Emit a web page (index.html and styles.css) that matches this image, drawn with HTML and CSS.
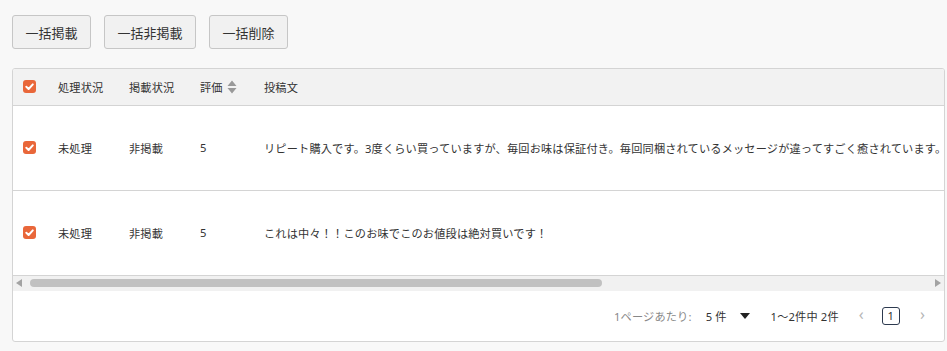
FILE: index.html
```html
<!DOCTYPE html>
<html lang="ja">
<head>
<meta charset="utf-8">
<link rel="stylesheet" href="styles.css">
</head>
<body>
<div class="toolbar">
  <button class="btn">一括掲載</button>
  <button class="btn">一括非掲載</button>
  <button class="btn">一括削除</button>
</div>
<div class="panel">
  <div class="scroller">
    <table class="grid">
      <colgroup>
        <col class="c-check"><col class="c-proc"><col class="c-pub"><col class="c-rate"><col>
      </colgroup>
      <thead>
        <tr>
          <th><span class="cb"><svg viewBox="0 0 13 13" width="13" height="13"><path d="M3.3 6.8 L5.6 9 L9.8 4.4" fill="none" stroke="#fff" stroke-width="2" stroke-linecap="round" stroke-linejoin="round"/></svg></span></th>
          <th>処理状況</th>
          <th>掲載状況</th>
          <th><span class="sortable">評価<svg class="sort" viewBox="0 0 10 14" width="10" height="14"><path d="M5 0.5 L9.5 6 H0.5 Z M5 13.5 L9.5 8 H0.5 Z" fill="#999"/></svg></span></th>
          <th>投稿文</th>
        </tr>
      </thead>
      <tbody>
        <tr>
          <td><span class="cb"><svg viewBox="0 0 13 13" width="13" height="13"><path d="M3.3 6.8 L5.6 9 L9.8 4.4" fill="none" stroke="#fff" stroke-width="2" stroke-linecap="round" stroke-linejoin="round"/></svg></span></td>
          <td>未処理</td>
          <td>非掲載</td>
          <td>5</td>
          <td>リピート購入です。3度くらい買っていますが、毎回お味は保証付き。毎回同梱されているメッセージが違ってすごく癒されています。</td>
        </tr>
        <tr>
          <td><span class="cb"><svg viewBox="0 0 13 13" width="13" height="13"><path d="M3.3 6.8 L5.6 9 L9.8 4.4" fill="none" stroke="#fff" stroke-width="2" stroke-linecap="round" stroke-linejoin="round"/></svg></span></td>
          <td>未処理</td>
          <td>非掲載</td>
          <td>5</td>
          <td>これは中々！！このお味でこのお値段は絶対買いです！</td>
        </tr>
      </tbody>
    </table>
  </div>
  <div class="hscroll">
    <svg class="arrow" viewBox="0 0 6 8" width="6" height="8"><path d="M0 4 L6 0 V8 Z" fill="#a3a3a3"/></svg>
    <div class="track"><div class="thumb"></div></div>
    <svg class="arrow" viewBox="0 0 6 8" width="6" height="8"><path d="M6 4 L0 0 V8 Z" fill="#a3a3a3"/></svg>
  </div>
  <div class="pager">
    <span class="per-label">1ページあたり:</span>
    <span class="per-value">5 件</span>
    <span class="caret"></span>
    <span class="range">1〜2件中 2件</span>
    <span class="chev">‹</span>
    <span class="page">1</span>
    <span class="chev">›</span>
  </div>
</div>
</body>
</html>
```

FILE: styles.css
```css
html, body {
  margin: 0;
  padding: 0;
  background: #f8f8f8;
}
body {
  font-family: "Noto Sans", "Noto Sans CJK JP", sans-serif;
  color: #333;
  font-size: 11.2px;
}
.toolbar {
  display: flex;
  gap: 13px;
  padding: 15px 0 0 12px;
  height: 34px;
}
.btn {
  height: 34px;
  padding: 0 12.5px;
  border: 1px solid #c6c6c6;
  border-radius: 3px;
  background: #f1f1f1;
  color: #333;
  font-family: "Noto Sans CJK JP", sans-serif;
  font-size: 13px;
  cursor: pointer;
}
.panel {
  margin: 19px 2px 0 12px;
  background: #fff;
  border: 1px solid #d4d4d4;
  border-radius: 3px;
  overflow: hidden;
}
.scroller {
  overflow: hidden;
}
.grid {
  border-collapse: collapse;
  table-layout: fixed;
  width: 1470px;
  font-family: "Noto Sans", "Noto Sans CJK JP", sans-serif;
  font-size: 11.2px;
  letter-spacing: 0.16px;
}
.c-check { width: 45px; }
.c-proc { width: 71px; }
.c-pub { width: 71px; }
.c-rate { width: 64px; }
.grid th, .grid td {
  text-align: left;
  white-space: nowrap;
  padding: 0;
  font-weight: normal;
  vertical-align: middle;
}
.grid th:first-child, .grid td:first-child {
  padding-left: 10px;
}
.grid thead tr {
  height: 36px;
  background: #f2f2f2;
  border-bottom: 1px solid #d4d4d4;
}
.grid tbody tr {
  height: 85px;
  border-bottom: 1px solid #d4d4d4;
}
.cb {
  display: block;
  width: 13px;
  height: 13px;
  border-radius: 3px;
  background: #e9673a;
}
.cb svg { display: block; }
.sortable {
  display: inline-flex;
  align-items: center;
  gap: 4px;
}
.sort { display: block; }
.hscroll {
  display: flex;
  align-items: center;
  height: 15px;
  background: #f1f1f1;
  padding: 0 3px 0 3px;
}
.arrow { display: block; flex: none; }
.track {
  flex: 1;
  margin: 0 8px 0 8px;
}
.thumb {
  width: 572px;
  height: 8px;
  border-radius: 4px;
  background: #c1c1c1;
}
.pager {
  display: flex;
  align-items: center;
  justify-content: flex-end;
  height: 50px;
  padding-right: 19px;
  font-family: "Noto Sans", "Noto Sans CJK JP", sans-serif;
  font-size: 11.2px;
  letter-spacing: 0.16px;
}
.per-label { color: #888; }
.per-value { margin-left: 14px; color: #333; }
.caret {
  margin-left: 13px;
  width: 0;
  height: 0;
  border-left: 5.5px solid transparent;
  border-right: 5.5px solid transparent;
  border-top: 6px solid #222;
}
.range { margin-left: 21px; color: #333; }
.chev {
  color: #b5b5b5;
  font-size: 16px;
  line-height: 1;
  margin-left: 20px;
  margin-top: -3px;
}
.page {
  margin-left: 18px;
  width: 16px;
  height: 16px;
  border: 1.5px solid #2d3a4f;
  border-radius: 3px;
  display: flex;
  align-items: center;
  justify-content: center;
  color: #333;
  font-size: 11.2px;
}
.page + .chev { margin-left: 20px; }
```
